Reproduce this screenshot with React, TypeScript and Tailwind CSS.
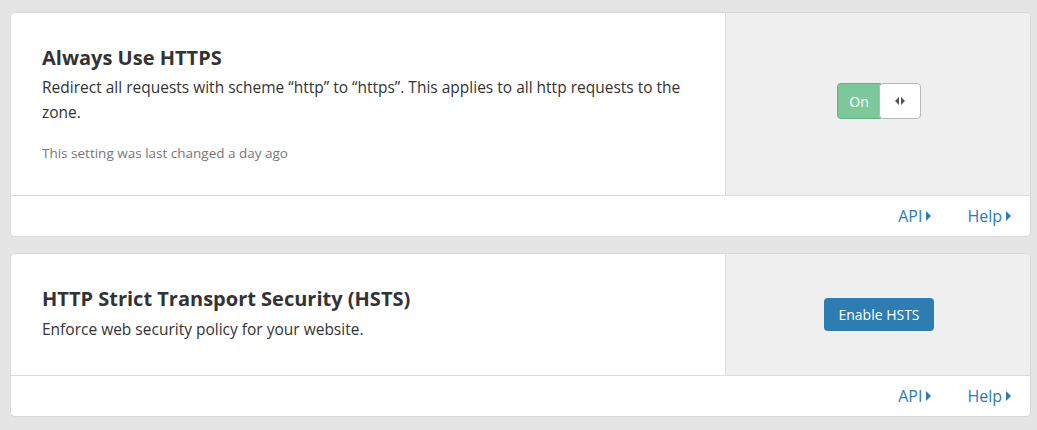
import { ReactNode } from "react";

function Caret() {
    return <svg width="5" height="10" viewBox="0 0 5 10" className="ml-[4px] inline-block">
        <path d="M0 0 L5 5 L0 10 Z" fill="currentColor" />
    </svg>
}

function Footer() {
    return <div className="h-[41px] border-t border-[#dcdcdc] flex items-center justify-end pr-[19px] gap-[36px] text-[16px] text-[#2c7cb0]">
        <a href="#" className="flex items-center">API<Caret /></a>
        <a href="#" className="flex items-center">Help<Caret /></a>
    </div>
}

function Card({ title, children, control, bottom }: { title: string; children: ReactNode; control: ReactNode; bottom: string }) {
    return <div className="bg-white border border-[#d9d9d9] rounded-[5px] overflow-hidden">
        <div className="flex">
            <div className={"w-[715px] border-r border-[#dcdcdc] pl-[31px] pr-[23px] pt-[31px] " + bottom}>
                <h2 className="text-[20px] leading-[28px] font-bold text-[#333]">{title}</h2>
                {children}
            </div>
            <div className="flex-1 bg-[#efefef] flex items-center justify-center">
                {control}
            </div>
        </div>
        <Footer />
    </div>
}

function Toggle() {
    return <div className="flex h-[36px] w-[84px] mb-[6px] ml-[2px]">
        <div className="w-[44px] bg-[#7cc89b] border border-[#64b184] rounded-l-[4px] flex items-center justify-center text-white text-[14px]">On</div>
        <div className="flex-1 -ml-[2px] bg-white border border-[#b5b9b7] rounded-[4px] flex items-center justify-center">
            <svg width="10" height="8" viewBox="0 0 10 8">
                <path d="M4 0 L0 4 L4 8 Z" fill="#555" />
                <path d="M6 0 L10 4 L6 8 Z" fill="#555" />
            </svg>
        </div>
    </div>
}

export default function App() {
    return <div className="min-h-screen bg-[#e5e5e5] pl-[10px] pr-[6px] pt-[12px] pb-[14px] flex flex-col gap-[16px] text-[#333]" style={{ fontFamily: '"Open Sans", sans-serif' }}>
        <Card title="Always Use HTTPS" control={<Toggle />} bottom="pb-[32px]">
            <p className="mt-[3px] text-[15.5px] leading-[25px]">
                Redirect all requests with scheme “http” to “https”. This applies to all http requests to the zone.
            </p>
            <p className="mt-[18px] text-[13.5px] leading-[20px] text-[#777]">This setting was last changed a day ago</p>
        </Card>
        <Card title="HTTP Strict Transport Security (HSTS)" control={
            <button className="bg-[#2d7db3] text-white text-[14px] h-[33px] w-[110px] rounded-[4px] ml-[2px]">Enable HSTS</button>
        } bottom="pb-[33px]">
            <p className="mt-[4px] text-[15.5px] leading-[25px]">Enforce web security policy for your website.</p>
        </Card>
    </div>
}
